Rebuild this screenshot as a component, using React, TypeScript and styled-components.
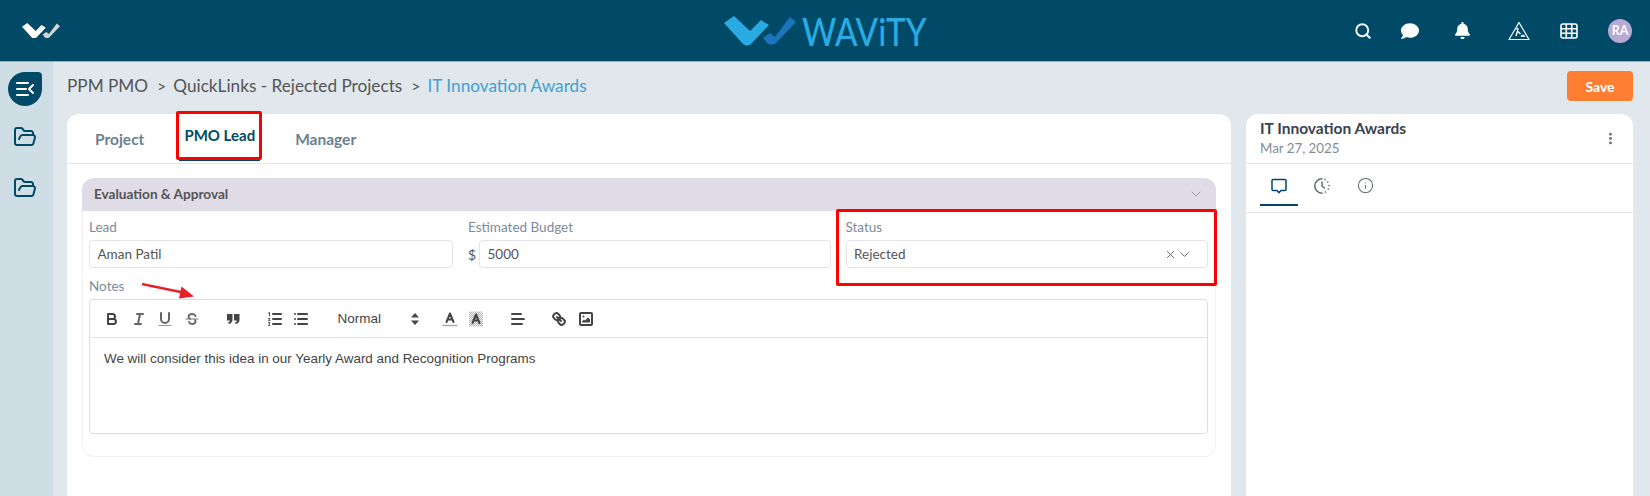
import type { ReactNode } from 'react';
import styled, { createGlobalStyle } from 'styled-components';
import { Search, FolderOpen, EllipsisVertical, Info, X, ChevronDown } from 'lucide-react';
import { FaComment, FaBell } from 'react-icons/fa';

const GlobalStyle = createGlobalStyle`
  html, body {
    margin: 0;
    height: 100%;
    overflow: hidden;
  }
  body {
    font-family: 'Lato', 'Liberation Sans', sans-serif;
    background: #e0e8ee;
  }
  #root {
    height: 100%;
  }
`;

const Page = styled.div`
  height: 496px;
  display: flex;
  flex-direction: column;
`;

const Header = styled.header`
  height: 61px;
  flex: none;
  background: #004a68;
  border-bottom: 1px solid #7fb8d2;
  display: grid;
  grid-template-columns: 1fr auto 1fr;
  align-items: center;
  padding: 0 18px;
`;

const HomeLink = styled.a`
  display: flex;
  padding-left: 4px;
`;

const BrandMark = styled.div`
  display: flex;
  align-items: center;
  gap: 6px;
  height: 30px;
  margin-top: 1px;
`;

const BrandName = styled.span`
  width: 125px;
  color: #29abe2;
  font-size: 38px;
  font-weight: 500;
  line-height: 30px;
  white-space: nowrap;
  transform: scaleX(0.87);
  transform-origin: left center;
`;

const HeaderActions = styled.div`
  display: flex;
  justify-content: flex-end;
  align-items: center;
`;

const HeaderAction = styled.span<{ $gap: number }>`
  width: 24px;
  height: 24px;
  margin-left: ${(p) => p.$gap}px;
  display: flex;
  align-items: center;
  justify-content: center;
  color: #fff;
`;

const Avatar = styled.span`
  width: 24px;
  height: 24px;
  margin-left: 27px;
  border-radius: 50%;
  background: #b8a9d3;
  color: #fff;
  font-size: 12.500px;
  font-weight: 700;
  display: flex;
  align-items: center;
  justify-content: center;
`;

const Body = styled.div`
  flex: 1;
  min-height: 0;
  display: flex;
`;

const Sidebar = styled.aside`
  width: 53px;
  flex: none;
  background: #cfdee4;
  display: flex;
  flex-direction: column;
  align-items: center;
  padding: 10px 3px 0 0;
  box-sizing: border-box;
  color: #004a68;
`;

const ToggleButton = styled.div`
  width: 34px;
  height: 34px;
  margin-bottom: 19px;
  background: #004a68;
  border-radius: 50% 4px 50% 50%;
  display: flex;
  align-items: center;
  justify-content: center;
`;

const SideItem = styled.div`
  height: 24px;
  margin-bottom: 27px;
`;

const Content = styled.main`
  flex: 1;
  min-width: 0;
  padding: 0 17px 0 14px;
  display: flex;
  flex-direction: column;
`;

const TopRow = styled.div`
  height: 52px;
  flex: none;
  display: flex;
  justify-content: space-between;
  align-items: flex-start;
`;

const Breadcrumb = styled.nav`
  display: flex;
  align-items: center;
  height: 30px;
  margin-top: 8px;
  font-size: 17.200px;
  color: #555;
`;

const Crumb = styled.span<{ $current?: boolean }>`
  color: ${(p) => (p.$current ? '#3fa2cf' : '#555')};
`;

const CrumbSep = styled.span`
  margin: 0 7px 0 9px;
  font-size: 16px;
`;

const SaveButton = styled.button`
  width: 66px;
  height: 30px;
  margin-top: 9px;
  border: 0;
  border-radius: 4px;
  background: #ff7f32;
  color: #fff;
  font: 700 14px 'Lato', sans-serif;
`;

const Panels = styled.div`
  flex: 1;
  min-height: 0;
  display: flex;
  gap: 15px;
`;

const Card = styled.section`
  background: #fff;
  border-radius: 12px 12px 0 0;
`;

const MainCard = styled(Card)`
  flex: 1;
  min-width: 0;
`;

const SideCard = styled(Card)`
  width: 387px;
  flex: none;
`;

const Tabs = styled.div`
  height: 49px;
  border-bottom: 1px solid #e6e9ec;
  padding-left: 23px;
  display: flex;
  gap: 30px;
`;

const Tab = styled.div<{ $active?: boolean }>`
  position: relative;
  height: 47px;
  padding: ${(p) => (p.$active ? '0 5px 4px' : '4px 5px 0')};
  box-sizing: border-box;
  display: flex;
  align-items: center;
  justify-content: center;
  font-size: ${(p) => (p.$active ? '15px' : '15.500px')};
  font-weight: 700;
  color: ${(p) => (p.$active ? '#004a68' : '#6c7f90')};
  border-bottom: 2px solid ${(p) => (p.$active ? '#004a68' : 'transparent')};
`;

const RedBox = styled.div<{ $inset: string }>`
  position: absolute;
  inset: ${(p) => p.$inset};
  border: 3px solid #f00;
  border-radius: 2px;
  pointer-events: none;
`;

const Accordion = styled.div`
  margin: 14px 15px 0;
  border: 1px solid #f0f0f0;
  border-top: 0;
  border-radius: 12px;
`;

const AccordionHead = styled.div`
  height: 33px;
  margin: 0 -1px;
  padding: 0 12px 1px;
  box-sizing: border-box;
  background: #dfdce7;
  border-radius: 12px 12px 0 0;
  display: flex;
  align-items: center;
  justify-content: space-between;
  font-size: 13.600px;
  font-weight: 700;
  color: #555;
`;

const AccordionBody = styled.div`
  padding: 8px 7px 22px 6px;
`;

const FieldGrid = styled.div`
  display: grid;
  grid-template-columns: 364px 1fr 1fr;
  column-gap: 15px;
`;

const Field = styled.div`
  position: relative;
  min-width: 0;
`;

const Label = styled.div`
  height: 16px;
  line-height: 16px;
  margin-bottom: 5px;
  font-size: 13.500px;
  color: #7b8b9b;
`;

const InputBox = styled.div`
  flex: 1;
  min-width: 0;
  height: 28px;
  box-sizing: border-box;
  border: 1px solid #e2e4e7;
  border-radius: 4px;
  padding: 0 8px 0 7.500px;
  display: flex;
  align-items: center;
  justify-content: space-between;
  font-size: 13.500px;
  color: #555;
`;

const Row = styled.div`
  display: flex;
  align-items: center;
`;

const Prefix = styled.span`
  width: 11px;
  font-size: 14px;
  color: #555;
`;

const SelectIcons = styled.span`
  display: flex;
  align-items: center;
  color: #555;
  margin-right: 7px;
`;

const NotesBlock = styled.div`
  position: relative;
  margin-top: 10px;
`;

const Arrow = styled.svg`
  position: absolute;
  left: 52px;
  top: 5px;
`;

const Editor = styled.div`
  height: 135px;
  box-sizing: border-box;
  border: 1px solid #dedede;
  border-radius: 4px;
`;

const Toolbar = styled.div`
  height: 38px;
  box-sizing: border-box;
  border-bottom: 1px solid #e3e3e3;
  padding-left: 9px;
  display: flex;
  align-items: center;
  gap: 15px;
`;

const ToolGroup = styled.div`
  display: flex;
`;

const Tool = styled.span`
  width: 26.500px;
  height: 24px;
  display: flex;
  align-items: center;
  justify-content: center;
`;

const Picker = styled.span`
  width: 92px;
  height: 24px;
  padding: 0 3px 0 8px;
  box-sizing: border-box;
  display: flex;
  align-items: center;
  justify-content: space-between;
  font: 13.500px 'Liberation Sans', Arial, sans-serif;
  color: #444;
`;

const EditorText = styled.div`
  padding: 11px 14px;
  font: 13.430px/20px 'Liberation Sans', Arial, sans-serif;
  color: #444;
`;

const SideHead = styled.div`
  height: 49px;
  padding: 0 15px 0 14px;
  border-bottom: 1px solid #e6e9ec;
  display: flex;
  align-items: center;
  justify-content: space-between;
`;

const SideTitle = styled.div`
  font-size: 15.500px;
  font-weight: 700;
  line-height: 19px;
  color: #3a4250;
`;

const SideDate = styled.div`
  font-size: 13.300px;
  line-height: 20px;
  color: #7f8c99;
`;

const IconTabs = styled.div`
  height: 48px;
  padding-left: 14px;
  border-bottom: 1px solid #e6e9ec;
  display: flex;
  gap: 5px;
`;

const IconTab = styled.div<{ $active?: boolean }>`
  width: 38px;
  height: 42px;
  padding-top: 3px;
  box-sizing: border-box;
  display: flex;
  align-items: center;
  justify-content: center;
  color: ${(p) => (p.$active ? '#004a68' : '#5f6b76')};
  border-bottom: 2px solid ${(p) => (p.$active ? '#004a68' : 'transparent')};
`;

const Logo = ({ width, light, dark }: { width: number; light: string; dark: string }) => (
  <svg width={width} viewBox="0 0 72 30" height={(width * 30) / 72}>
    <path d="M0 7 10 0 26 15 37 4 45 9 27 28Q23 31 19 28Z" fill={light} />
    <path d="M39 22 46 17 51 21 66 1 72 6 52 27Q48 30 44 28Z" fill={dark} />
  </svg>
);

const ToggleGlyph = () => (
  <svg width="20" height="16" viewBox="0 0 20 16" fill="none" stroke="#fff" strokeWidth="2" strokeLinecap="round" strokeLinejoin="round">
    <path d="M2 2h11M2 8h9M2 14h11M18 4l-4 4 4 4" />
  </svg>
);

const RoadSign = () => (
  <svg width="22" height="20" viewBox="0 0 22 20" fill="none" stroke="#fff">
    <path d="M11 1.500 21 18.500H1Z" strokeWidth="1.200" strokeLinejoin="round" />
    <circle cx="9.500" cy="8" r="1.200" fill="#fff" stroke="none" />
    <path d="M8 15l1.500-5 3 3" strokeWidth="1.400" />
    <path d="M13 15.500c0-2 3.500-2 4 0Z" fill="#fff" strokeWidth="0.600" />
  </svg>
);

const TableGlyph = () => (
  <svg width="18" height="16" viewBox="0 0 18 16" fill="none" stroke="#fff" strokeWidth="1.600">
    <rect x="1" y="1" width="16" height="14" rx="2" />
    <path d="M6.300 1v14M11.700 1v14M1 5.700h16M1 10.300h16" />
  </svg>
);

const CommentGlyph = () => (
  <svg width="18" height="18" viewBox="0 0 18 18" fill="none" stroke="currentColor" strokeWidth="1.500" strokeLinejoin="round">
    <path d="M3 2.500h12a1 1 0 0 1 1 1v9a1 1 0 0 1-1 1h-4L9 15.800 7 13.500H3a1 1 0 0 1-1-1v-9a1 1 0 0 1 1-1Z" />
  </svg>
);

const HistoryGlyph = () => (
  <svg width="18" height="18" viewBox="0 0 18 18" fill="none" stroke="currentColor" strokeWidth="1.500" strokeLinecap="round">
    <path d="M9 1.800a7.200 7.200 0 0 0 0 14.400" />
    <path d="M9 5v4l2.500 2" />
    <path d="M12 2.500h0M14.700 5h0M16 8.500h0M15.300 12h0M12.500 15h0" strokeWidth="1.700" />
  </svg>
);

const Quill = ({ children }: { children: ReactNode }) => (
  <svg width="18" height="18" viewBox="0 0 18 18" fill="none" stroke="#444" strokeWidth="2" strokeLinecap="round" strokeLinejoin="round">
    {children}
  </svg>
);

const TOOLS = {
  bold: (
    <>
      <path d="M5 4h4.500a2.500 2.500 0 0 1 0 5H5Z" />
      <path d="M5 9h5.500a2.500 2.500 0 0 1 0 5H5Z" />
    </>
  ),
  italic: <path d="M7 4h6M5 14h6M8 14l2-10" stroke="#666" />,
  underline: (
    <>
      <path d="M5 3v6a4 4 0 0 0 4 4 4 4 0 0 0 4-4V3" stroke="#666" />
      <path d="M3 15.500h12" stroke="#999" strokeWidth="1" />
    </>
  ),
  strike: (
    <>
      <path d="M12.500 6C12 4.800 10.800 4 9 4 6.800 4 5.500 5 5.500 6.500c0 1 .5 1.800 1.500 2.300M6 12c.5 1.300 1.500 2 3 2 2.300 0 3.500-1 3.500-2.500 0-.6-.2-1.100-.5-1.500" stroke="#666" strokeWidth="1.900" />
      <path d="M3 9h12" stroke="#777" strokeWidth="1" />
    </>
  ),
  quote: (
    <g fill="#444" stroke="none">
      <path d="M3 4h5.500v5.500c0 2.400-1.300 3.900-3.800 4.500l-.6-1.500c1.100-.3 1.700-1 1.800-2H3Z" />
      <path d="M10 4h5.500v5.500c0 2.400-1.300 3.900-3.800 4.500l-.6-1.500c1.100-.3 1.700-1 1.800-2H10Z" />
    </g>
  ),
  ordered: (
    <>
      <path d="M7 4h8M7 9h8M7 14h8" />
      <path d="M2.500 3 3.500 2.500V6M2.500 8.500h1.500L2.500 10.500H4M2.500 12.500h1.500L3 14l1 1.500H2.500" strokeWidth="0.900" />
    </>
  ),
  bullet: <path d="M6 4h9M6 9h9M6 14h9M3 4h0M3 9h0M3 14h0" />,
  color: (
    <>
      <path d="M5.500 12 9 3.500 12.500 12M6.500 9.500h5" />
      <path d="M2 15.500h14" stroke="#aaa" strokeWidth="1.500" />
    </>
  ),
  background: (
    <>
      <defs>
        <pattern id="hatch" width="2" height="2" patternUnits="userSpaceOnUse">
          <rect width="1" height="1" fill="#aaa" stroke="none" />
          <rect x="1" y="1" width="1" height="1" fill="#aaa" stroke="none" />
        </pattern>
      </defs>
      <rect x="2" y="1.500" width="14" height="15" fill="url(#hatch)" stroke="none" />
      <path d="M5.500 13 9 4.500 12.500 13M6.500 10.500h5" />
    </>
  ),
  align: <path d="M3 4h9M3 9h12M3 14h10" />,
  link: (
    <>
      <path d="M7 7l4 4" />
      <path d="M8.900 4.600a3.500 3.500 0 0 1 .4 4.700 3.500 3.500 0 0 1-4.700-.4C3.200 7.500 2 6.400 4.200 4.200S7.500 3.200 8.900 4.600Z" />
      <path d="M13.400 9.100a3.500 3.500 0 0 0-4.700-.4 3.500 3.500 0 0 0 .4 4.700c1.400 1.400 2.500 2.600 4.700.4S14.800 10.500 13.400 9.100Z" />
    </>
  ),
  image: (
    <>
      <rect x="3" y="3" width="12" height="12" rx="1" />
      <circle cx="6.500" cy="6.500" r="1" fill="#444" stroke="none" />
      <path d="M5 12.500v-1l2-2 1 1 3-3 2 2v3Z" fill="#444" stroke="none" />
    </>
  ),
};

const ToolIcon = ({ name }: { name: keyof typeof TOOLS }) => (
  <Tool>
    <Quill>{TOOLS[name]}</Quill>
  </Tool>
);

export default function App() {
  return (
    <>
      <GlobalStyle />
      <Page>
        <Header>
          <HomeLink>
            <Logo width={38} light="#fff" dark="#d4d4d4" />
          </HomeLink>
          <BrandMark>
            <Logo width={72} light="#29abe2" dark="#1b75bc" />
            <BrandName>WAViTY</BrandName>
          </BrandMark>
          <HeaderActions>
            <HeaderAction $gap={0}>
              <Search size={18} strokeWidth={2.500} />
            </HeaderAction>
            <HeaderAction $gap={23}>
              <FaComment size={18} />
            </HeaderAction>
            <HeaderAction $gap={28}>
              <FaBell size={17} />
            </HeaderAction>
            <HeaderAction $gap={33}>
              <RoadSign />
            </HeaderAction>
            <HeaderAction $gap={26}>
              <TableGlyph />
            </HeaderAction>
            <Avatar>RA</Avatar>
          </HeaderActions>
        </Header>
        <Body>
          <Sidebar>
            <ToggleButton>
              <ToggleGlyph />
            </ToggleButton>
            <SideItem>
              <FolderOpen size={24} strokeWidth={2} />
            </SideItem>
            <SideItem>
              <FolderOpen size={24} strokeWidth={2} />
            </SideItem>
          </Sidebar>
          <Content>
            <TopRow>
              <Breadcrumb>
                <Crumb>PPM PMO</Crumb>
                <CrumbSep>&gt;</CrumbSep>
                <Crumb>QuickLinks - Rejected Projects</Crumb>
                <CrumbSep>&gt;</CrumbSep>
                <Crumb $current>IT Innovation Awards</Crumb>
              </Breadcrumb>
              <SaveButton>Save</SaveButton>
            </TopRow>
            <Panels>
              <MainCard>
                <Tabs>
                  <Tab>Project</Tab>
                  <Tab $active>
                    PMO Lead
                    <RedBox $inset="-3px -2px -1px -3px" />
                  </Tab>
                  <Tab>Manager</Tab>
                </Tabs>
                <Accordion>
                  <AccordionHead>
                    Evaluation &amp; Approval
                    <ChevronDown size={16} strokeWidth={1} color="#777" />
                  </AccordionHead>
                  <AccordionBody>
                    <FieldGrid>
                      <Field>
                        <Label>Lead</Label>
                        <InputBox>Aman Patil</InputBox>
                      </Field>
                      <Field>
                        <Label>Estimated Budget</Label>
                        <Row>
                          <Prefix>$</Prefix>
                          <InputBox>5000</InputBox>
                        </Row>
                      </Field>
                      <Field>
                        <Label>Status</Label>
                        <InputBox>
                          Rejected
                          <SelectIcons>
                            <X size={13} strokeWidth={1.500} />
                            <ChevronDown size={15} strokeWidth={1.500} />
                          </SelectIcons>
                        </InputBox>
                        <RedBox $inset="-10px -9px -18px -10px" />
                      </Field>
                    </FieldGrid>
                    <NotesBlock>
                      <Label>Notes</Label>
                      <Arrow width="54" height="16" viewBox="0 0 54 16">
                        <path d="M1 1 42 9.500" stroke="#e8202a" strokeWidth="2.400" />
                        <path d="M53 13.500 38 15.500 40.500 3.500Z" fill="#e8202a" />
                      </Arrow>
                      <Editor>
                        <Toolbar>
                          <ToolGroup>
                            <ToolIcon name="bold" />
                            <ToolIcon name="italic" />
                            <ToolIcon name="underline" />
                            <ToolIcon name="strike" />
                          </ToolGroup>
                          <ToolGroup>
                            <ToolIcon name="quote" />
                          </ToolGroup>
                          <ToolGroup>
                            <ToolIcon name="ordered" />
                            <ToolIcon name="bullet" />
                          </ToolGroup>
                          <Picker>
                            Normal
                            <svg width="8" height="12" viewBox="0 0 8 12" fill="#444">
                              <path d="M4 0 8 4.500H0ZM4 12 0 7.500H8Z" />
                            </svg>
                          </Picker>
                          <ToolGroup>
                            <ToolIcon name="color" />
                            <ToolIcon name="background" />
                          </ToolGroup>
                          <ToolGroup>
                            <ToolIcon name="align" />
                          </ToolGroup>
                          <ToolGroup>
                            <ToolIcon name="link" />
                            <ToolIcon name="image" />
                          </ToolGroup>
                        </Toolbar>
                        <EditorText>We will consider this idea in our Yearly Award and Recognition Programs</EditorText>
                      </Editor>
                    </NotesBlock>
                  </AccordionBody>
                </Accordion>
              </MainCard>
              <SideCard>
                <SideHead>
                  <div>
                    <SideTitle>IT Innovation Awards</SideTitle>
                    <SideDate>Mar 27, 2025</SideDate>
                  </div>
                  <EllipsisVertical size={15} strokeWidth={2.500} color="#5f6b76" />
                </SideHead>
                <IconTabs>
                  <IconTab $active>
                    <CommentGlyph />
                  </IconTab>
                  <IconTab>
                    <HistoryGlyph />
                  </IconTab>
                  <IconTab>
                    <Info size={17} strokeWidth={1.500} />
                  </IconTab>
                </IconTabs>
              </SideCard>
            </Panels>
          </Content>
        </Body>
      </Page>
    </>
  );
}
